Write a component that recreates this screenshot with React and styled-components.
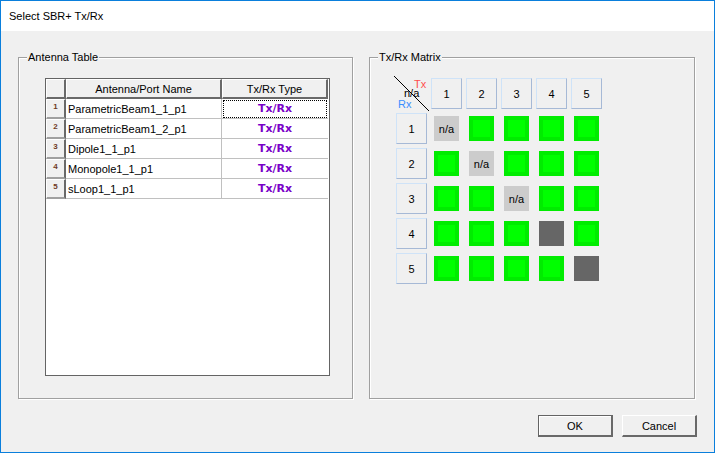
import React from "react";
import styled, { createGlobalStyle } from "styled-components";

const antennas = [
  "ParametricBeam1_1_p1",
  "ParametricBeam1_2_p1",
  "Dipole1_1_p1",
  "Monopole1_1_p1",
  "sLoop1_1_p1",
];

// 0 = n/a, 1 = on, 2 = disabled
const matrix = [
  [0, 1, 1, 1, 1],
  [1, 0, 1, 1, 1],
  [1, 1, 0, 1, 1],
  [1, 1, 1, 2, 1],
  [1, 1, 1, 1, 2],
];

const App = () => {
  return (
    <Dialog>
      <GlobalStyle />
      <TitleBar>Select SBR+ Tx/Rx</TitleBar>
      <Body>
        <Groups>
          <GroupBox $width={335}>
            <GroupLabel>Antenna Table</GroupLabel>
            <Table>
              <HeaderRow>
                <HeaderCell />
                <HeaderCell>Antenna/Port Name</HeaderCell>
                <HeaderCell>Tx/Rx Type</HeaderCell>
              </HeaderRow>
              {antennas.map((name, i) => (
                <Row key={name}>
                  <RowNumber>{i + 1}</RowNumber>
                  <NameCell>{name}</NameCell>
                  <TypeCell $focused={i === 0}>Tx/Rx</TypeCell>
                </Row>
              ))}
            </Table>
          </GroupBox>
          <GroupBox $width={326}>
            <GroupLabel>Tx/Rx Matrix</GroupLabel>
            <Matrix>
              <Corner>
                <CornerLine viewBox="0 0 36 36">
                  <line x1="0" y1="0" x2="35" y2="35" stroke="#000" strokeWidth="1" />
                </CornerLine>
                <CornerTx>Tx</CornerTx>
                <CornerNa>n/a</CornerNa>
                <CornerRx>Rx</CornerRx>
              </Corner>
              {[1, 2, 3, 4, 5].map((n) => (
                <AxisButton key={n}>{n}</AxisButton>
              ))}
              {matrix.map((row, r) => (
                <React.Fragment key={r}>
                  <AxisButton>{r + 1}</AxisButton>
                  {row.map((state, c) => (
                    <CellSlot key={c}>
                      {state === 0 && <NaCell>n/a</NaCell>}
                      {state === 1 && <OnCell />}
                      {state === 2 && <OffCell />}
                    </CellSlot>
                  ))}
                </React.Fragment>
              ))}
            </Matrix>
          </GroupBox>
        </Groups>
        <Footer>
          <DefaultButton>OK</DefaultButton>
          <PlainButton>Cancel</PlainButton>
        </Footer>
      </Body>
    </Dialog>
  );
};

const GlobalStyle = createGlobalStyle`
  html, body {
    margin: 0;
    padding: 0;
    background: #f0f0f0;
  }
  * {
    box-sizing: border-box;
  }
`;

const Dialog = styled.div`
  width: 715px;
  height: 453px;
  display: flex;
  flex-direction: column;
  border: 1px solid #0a7fdc;
  background: #f0f0f0;
  font-family: "Liberation Sans", Arial, sans-serif;
  font-size: 11px;
  color: #000;
  overflow: hidden;
`;

const TitleBar = styled.div`
  height: 30px;
  flex: none;
  padding-left: 8px;
  display: flex;
  align-items: center;
  background: #fff;
  font-size: 11px;
`;

const Body = styled.div`
  flex: 1;
  padding: 26px 17px 0;
  display: flex;
  flex-direction: column;
`;

const Groups = styled.div`
  display: flex;
  gap: 16px;
`;

const GroupBox = styled.div`
  position: relative;
  width: ${(p) => p.$width}px;
  height: 342px;
  border: 1px solid #a0a0a0;
  box-shadow: inset 1px 1px 0 #fff, 1px 1px 0 #fff;
  padding: 20px 0 0 26px;
`;

const GroupLabel = styled.span`
  position: absolute;
  top: -7px;
  left: 8px;
  padding: 0 1px;
  background: #f0f0f0;
  line-height: 13px;
  font-size: 11px;
`;

const Table = styled.div`
  width: 285px;
  height: 298px;
  background: #fff;
  border: 1px solid #646464;
`;

const Row = styled.div`
  display: grid;
  grid-template-columns: 20px 156px 106px;
  height: 20px;
`;

const HeaderRow = styled(Row)`
  height: 20px;
`;

const HeaderCell = styled.div`
  display: flex;
  align-items: center;
  justify-content: center;
  background: #f0f0f0;
  border-top: 1px solid #fff;
  border-left: 1px solid #fff;
  border-right: 2px solid #696969;
  border-bottom: 2px solid #696969;
`;

const RowNumber = styled.div`
  display: flex;
  justify-content: center;
  padding-top: 2px;
  background: #f0f0f0;
  border-top: 1px solid #fff;
  border-left: 1px solid #fff;
  border-right: 2px solid #696969;
  border-bottom: 2px solid #a0a0a0;
  font-size: 8px;
  font-weight: 700;
  line-height: 10px;
  color: #6e3a1e;
`;

const NameCell = styled.div`
  display: flex;
  align-items: center;
  padding-left: 2px;
  background: #fff;
  border-right: 1px solid #c0c0c0;
  border-bottom: 1px solid #c0c0c0;
  white-space: nowrap;
`;

const TypeCell = styled.div`
  display: flex;
  align-items: center;
  justify-content: center;
  background: #fff;
  border-bottom: 1px solid #c0c0c0;
  color: #7a00c8;
  font-family: "DejaVu Sans", sans-serif;
  font-weight: 700;
  font-size: 11px;
  outline: ${(p) => (p.$focused ? "1px dotted #000" : "none")};
  outline-offset: -2px;
`;

const Matrix = styled.div`
  display: grid;
  grid-template-columns: repeat(6, 31px);
  grid-auto-rows: 31px;
  gap: 4px;
`;

const Corner = styled.div`
  position: relative;
`;

const CornerLine = styled.svg`
  position: absolute;
  left: -2px;
  top: -2px;
  width: 36px;
  height: 36px;
`;

const CornerTx = styled.span`
  position: absolute;
  left: 18px;
  top: 0;
  color: #ff4d4d;
  font-size: 11px;
`;

const CornerNa = styled.span`
  position: absolute;
  left: 8px;
  top: 9px;
`;

const CornerRx = styled.span`
  position: absolute;
  left: 2px;
  top: 20px;
  color: #3a8eff;
  font-size: 11px;
`;

const AxisButton = styled.div`
  display: flex;
  align-items: center;
  justify-content: center;
  background: #f0f0f0;
  border-top: 1px solid #cfe3f8;
  border-left: 1px solid #cfe3f8;
  border-right: 1px solid #a6b9d6;
  border-bottom: 1px solid #a6b9d6;
`;

const CellSlot = styled.div`
  display: flex;
  align-items: center;
  justify-content: center;
`;

const Square = styled.div`
  width: 25px;
  height: 25px;
  display: flex;
  align-items: center;
  justify-content: center;
`;

const NaCell = styled(Square)`
  background: #cccccc;
`;

const OnCell = styled(Square)`
  background: #00ff00;
  border: 4px solid #00ec00;
`;

const OffCell = styled(Square)`
  background: #666666;
`;

const Footer = styled.div`
  display: flex;
  justify-content: flex-end;
  gap: 9px;
  margin-top: 16px;
`;

const PlainButton = styled.div`
  width: 75px;
  height: 22px;
  display: flex;
  align-items: center;
  justify-content: center;
  background: #f0f0f0;
  border-top: 1px solid #fff;
  border-left: 1px solid #fff;
  border-right: 2px solid #696969;
  border-bottom: 2px solid #696969;
`;

const DefaultButton = styled(PlainButton)`
  border-top: 1px solid #646464;
  border-left: 1px solid #646464;
  box-shadow: inset 1px 1px 0 #fff;
`;

export default App;
